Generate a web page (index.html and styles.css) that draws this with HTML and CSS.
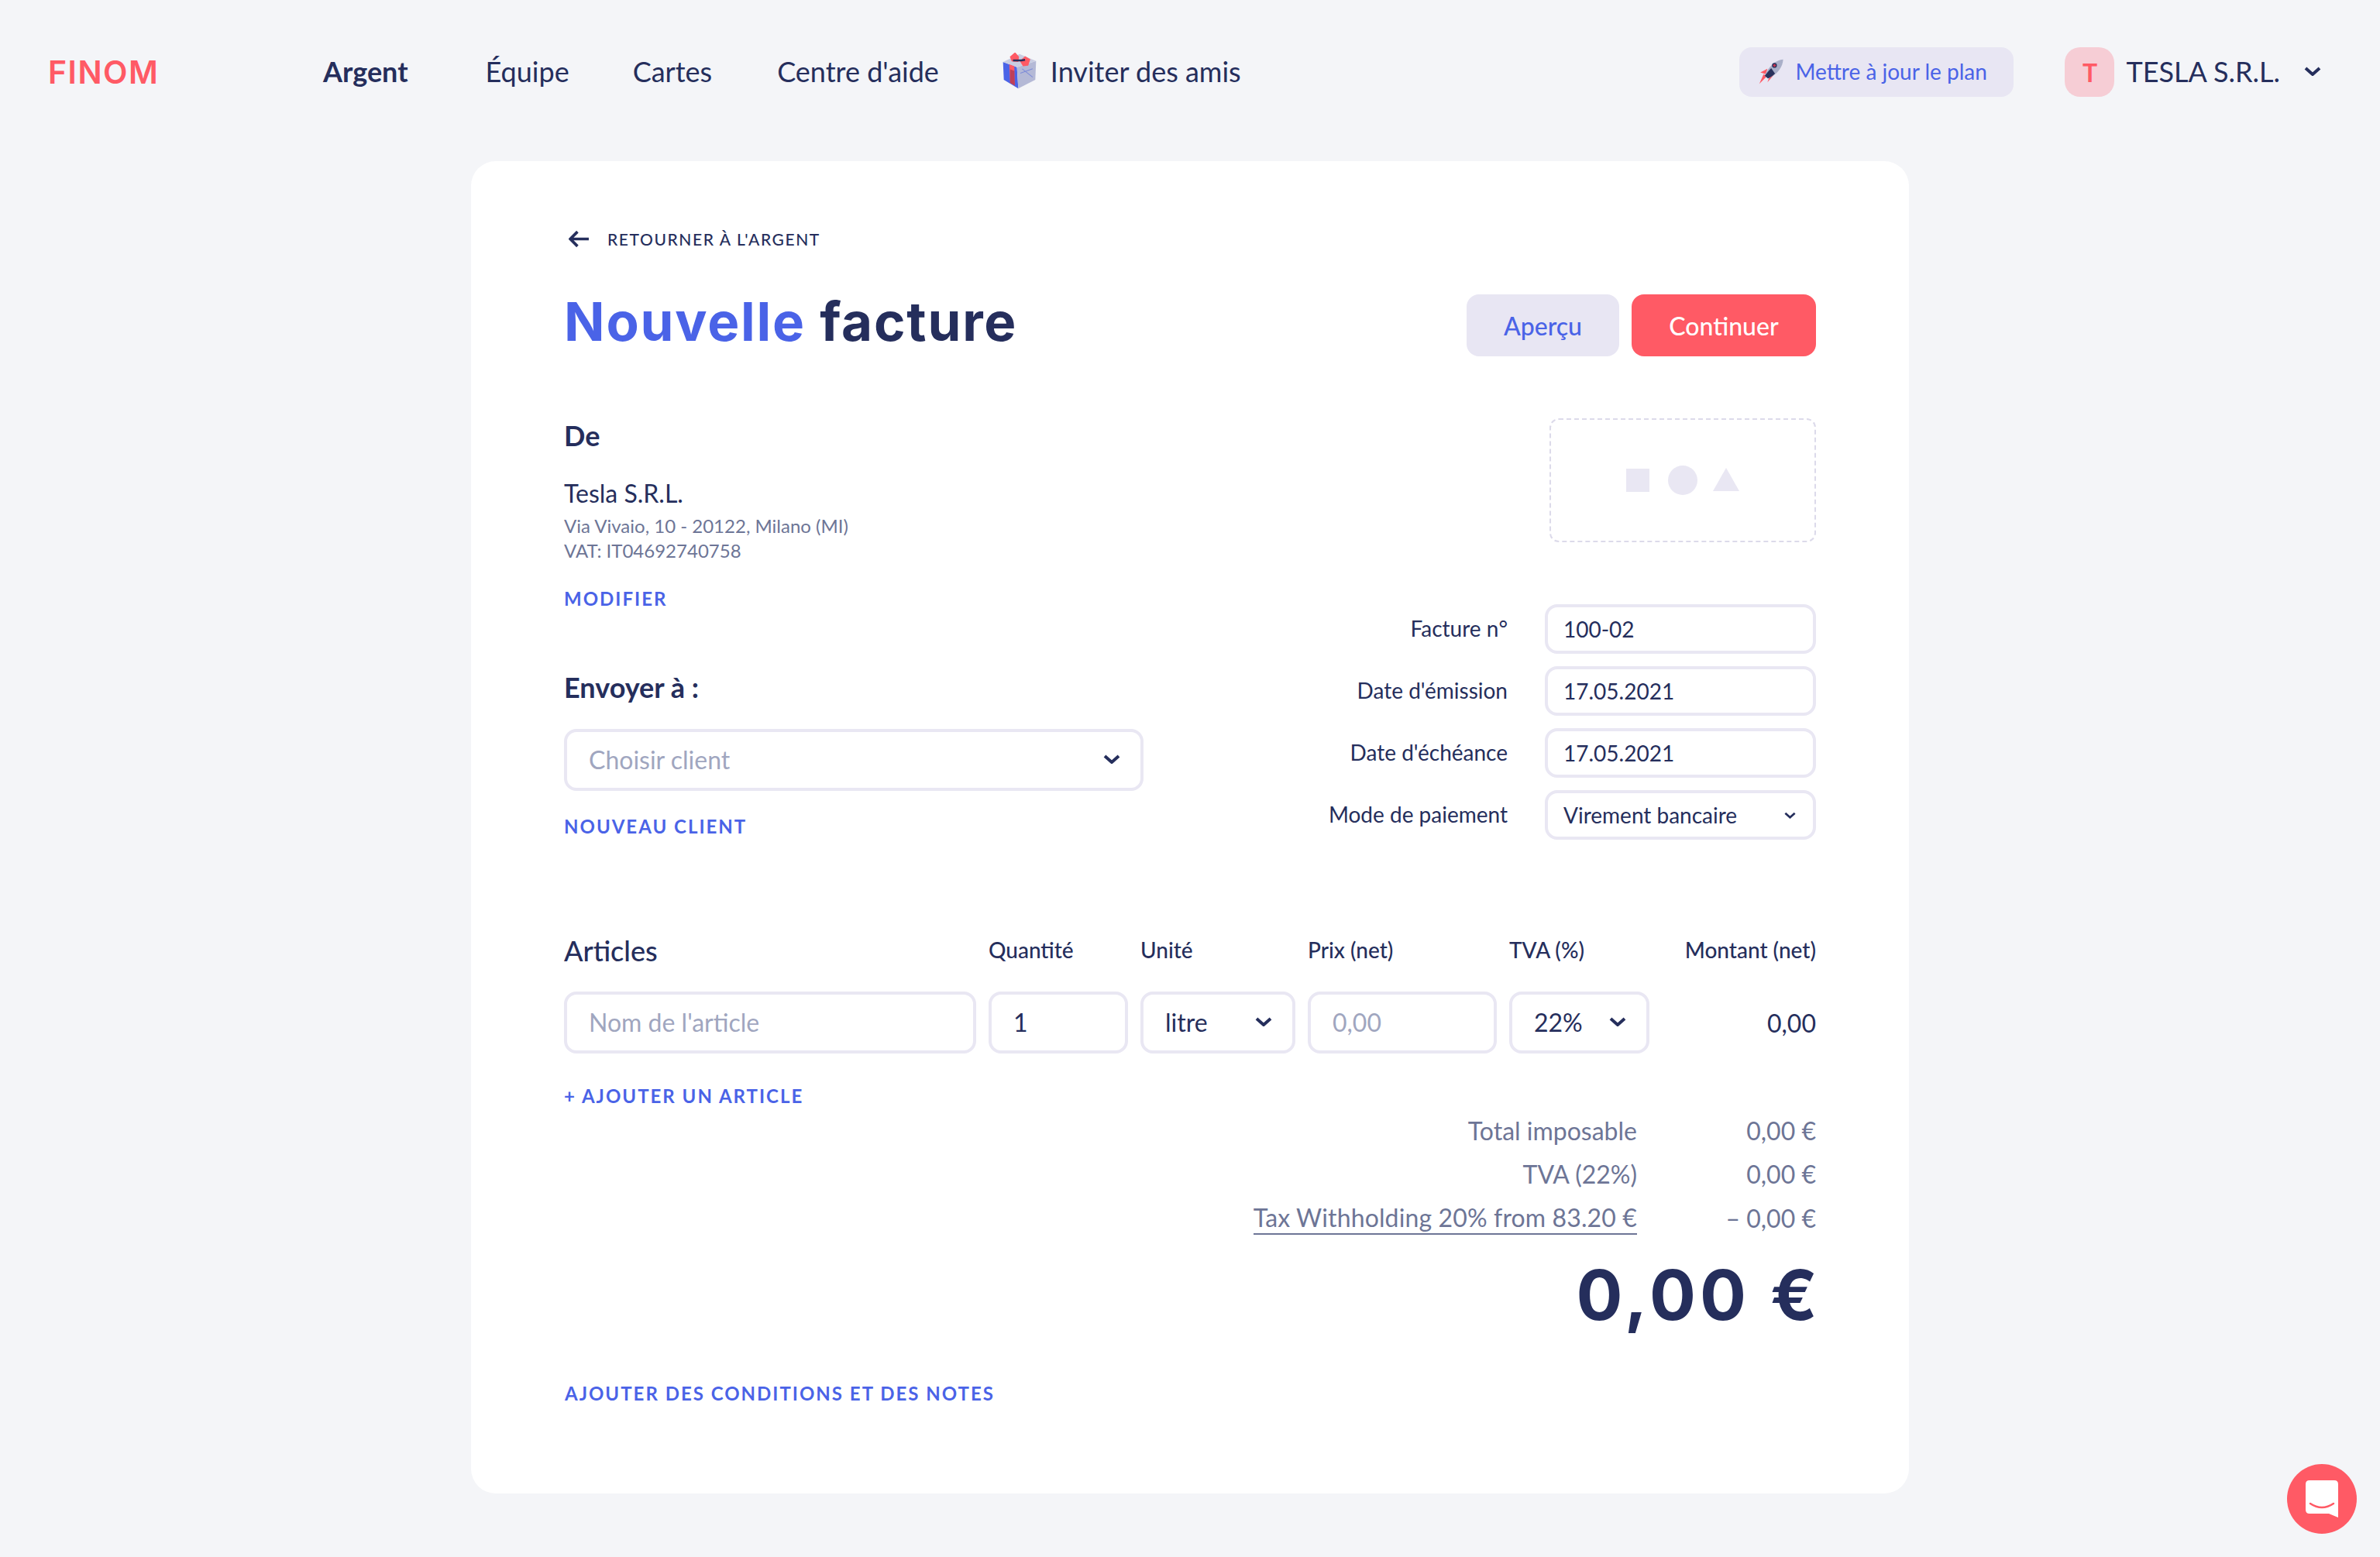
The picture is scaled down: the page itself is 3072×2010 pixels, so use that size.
FILE: index.html
```html
<!DOCTYPE html>
<html lang="fr">
<head>
    <meta charset="UTF-8">
    <meta name="viewport" content="width=device-width, initial-scale=1.0">
    <title>Nouvelle facture</title>
    <link rel="stylesheet" href="styles.css">
</head>
<body>
    <header class="nav">
        <div class="logo">FINOM</div>
        <nav class="nav-links">
            <a class="nav-link nav-link-active">Argent</a>
            <a class="nav-link">Équipe</a>
            <a class="nav-link">Cartes</a>
            <a class="nav-link nav-link-help">Centre d'aide</a>
            <a class="nav-link nav-invite">
                <svg class="gift-icon" viewBox="100 60 130 135">
                    <polygon points="102,92 155,112 160,193 105,160" fill="#4a63e7"/>
                    <polygon points="155,112 228,88 225,160 160,193" fill="#b4b9d6"/>
                    <polygon points="102,92 165,62 228,88 155,112" fill="#c9cde2"/>
                    <polygon points="126,101 145,108 147,182 129,172" fill="#ff5a65"/>
                    <polygon points="129,120 145,126 147,182 129,172" fill="#8a2a4c" opacity="0.55"/>
                    <path d="M168 135 L215 118 M175 118 L215 150" stroke="#7d8bd8" stroke-width="3" fill="none"/>
                    <path d="M128 72 L148 55 L163 72 L160 92 L135 90 Z" fill="#ff5a65"/>
                    <path d="M166 88 L186 70 L206 82 L198 106 L178 108 Z" fill="#ff5a65"/>
                    <path d="M140 86 L172 86 L186 84" stroke="#252e5c" stroke-width="7" fill="none"/>
                </svg>
                Inviter des amis
            </a>
        </nav>
        <div class="nav-right">
            <a class="upgrade">
                <svg class="rocket-icon" viewBox="60 45 100 100">
                    <path d="M72 98 L98 84 L92 104 Z" fill="#ff5a65"/>
                    <path d="M68 140 L84 104 L96 112 Z" fill="#ff5a65"/>
                    <path d="M98 134 L124 104 L106 112 Z" fill="#ff5a65"/>
                    <path d="M156 50 C128 52 102 76 88 110 L100 120 C134 106 154 80 156 50 Z" fill="#a9afc8"/>
                    <path d="M112 82 C104 90 96 100 88 110 L100 120 C110 116 118 110 126 102 Z" fill="#2a325c"/>
                    <circle cx="124" cy="72" r="9" fill="#2a325c"/>
                    <circle cx="124" cy="72" r="5" fill="#c8344f"/>
                </svg>
                Mettre à jour le plan
            </a>
            <div class="avatar">T</div>
            <div class="company">TESLA S.R.L.</div>
            <svg class="chevron chevron-nav" viewBox="0 0 22 12"><path d="M2 2 L11 10 L20 2"/></svg>
        </div>
    </header>

    <main class="card">
        <a class="back">
            <svg class="back-arrow" viewBox="0 0 26 22"><path d="M25 11 H2 M11 2 L2 11 L11 20"/></svg>
            RETOURNER À L'ARGENT
        </a>

        <div class="title-row">
            <h1 class="title"><span class="title-blue">Nouvelle</span> facture</h1>
            <div class="actions">
                <button class="btn btn-light">Aperçu</button>
                <button class="btn btn-red">Continuer</button>
            </div>
        </div>

        <section class="top">
            <div class="top-left">
                <h2 class="heading">De</h2>
                <div class="from-name">Tesla S.R.L.</div>
                <div class="from-line from-address">Via Vivaio, 10 - 20122, Milano (MI)</div>
                <div class="from-line">VAT: IT04692740758</div>
                <a class="link link-modify">MODIFIER</a>

                <h2 class="heading heading-send">Envoyer à :</h2>
                <div class="field field-big client-select">
                    <span class="placeholder">Choisir client</span>
                    <svg class="chevron" viewBox="0 0 22 12"><path d="M2 2 L11 10 L20 2"/></svg>
                </div>
                <a class="link link-client">NOUVEAU CLIENT</a>
            </div>

            <div class="top-right">
                <div class="logo-drop">
                    <span class="shape-square"></span>
                    <span class="shape-circle"></span>
                    <span class="shape-triangle"></span>
                </div>
                <div class="meta">
                    <label class="meta-label">Facture n°</label>
                    <div class="field field-small">100-02</div>
                    <label class="meta-label">Date d'émission</label>
                    <div class="field field-small">17.05.2021</div>
                    <label class="meta-label">Date d'échéance</label>
                    <div class="field field-small">17.05.2021</div>
                    <label class="meta-label">Mode de paiement</label>
                    <div class="field field-small">
                        Virement bancaire
                        <svg class="chevron chevron-small" viewBox="0 0 22 12"><path d="M2 2 L11 10 L20 2"/></svg>
                    </div>
                </div>
            </div>
        </section>

        <section class="items">
            <div class="items-head">Articles</div>
            <div class="col-head">Quantité</div>
            <div class="col-head">Unité</div>
            <div class="col-head">Prix (net)</div>
            <div class="col-head">TVA (%)</div>
            <div class="col-head col-right">Montant (net)</div>

            <div class="field field-big"><span class="placeholder">Nom de l'article</span></div>
            <div class="field field-big">1</div>
            <div class="field field-big">
                litre
                <svg class="chevron" viewBox="0 0 22 12"><path d="M2 2 L11 10 L20 2"/></svg>
            </div>
            <div class="field field-big"><span class="placeholder">0,00</span></div>
            <div class="field field-big">
                22%
                <svg class="chevron" viewBox="0 0 22 12"><path d="M2 2 L11 10 L20 2"/></svg>
            </div>
            <div class="amount">0,00</div>
        </section>

        <a class="link link-add">+ AJOUTER UN ARTICLE</a>

        <section class="totals">
            <div class="total-row"><span>Total imposable</span><span class="total-value">0,00 €</span></div>
            <div class="total-row"><span>TVA (22%)</span><span class="total-value">0,00 €</span></div>
            <div class="total-row total-row-tax"><span class="withholding">Tax Withholding 20% from 83.20 €</span><span class="total-value">– 0,00 €</span></div>
        </section>
        <div class="grand-total">0,00 €</div>

        <a class="link link-terms">AJOUTER DES CONDITIONS ET DES NOTES</a>
    </main>

    <button class="chat">
        <svg viewBox="0 0 42 48">
            <path d="M5 0 H37 Q42 0 42 5 V48 L30 43 H5 Q0 43 0 38 V5 Q0 0 5 0 Z" fill="#fff"/>
            <path d="M6 30 Q21 40 36 30" stroke="#ff5a65" stroke-width="2.5" fill="none" stroke-linecap="round"/>
        </svg>
    </button>
</body>
</html>
```

FILE: styles.css
```css
* {
    box-sizing: border-box;
}

body {
    margin: 0;
    height: 2010px;
    overflow: hidden;
    background: #f4f5f8;
    color: #252e5c;
    font-family: Lato, "Liberation Sans", sans-serif;
}

/* top bar */
.nav {
    display: flex;
    align-items: center;
    height: 186px;
    padding: 0 76px 0 62px;
}

.logo {
    width: 355px;
    color: #ff5a65;
    font-family: Inter, sans-serif;
    font-size: 41px;
    font-weight: 600;
    letter-spacing: 1.5px;
}

.nav-links {
    display: flex;
    align-items: center;
    gap: 82px;
    margin-top: -2px;
    font-size: 36px;
}

.nav-link-active {
    font-weight: 700;
    margin-right: 18px;
}

.nav-link-help {
    margin-left: 2px;
}

.nav-invite {
    display: flex;
    align-items: center;
    gap: 18px;
}

.gift-icon {
    width: 44px;
    height: 48px;
}

.nav-right {
    display: flex;
    align-items: center;
    margin-left: auto;
}

.upgrade {
    display: flex;
    align-items: center;
    gap: 14px;
    width: 354px;
    height: 64px;
    padding: 0 0 2px 23px;
    border-radius: 16px;
    background: #e8e6f3;
    color: #4a63e7;
    font-size: 28px;
}

.rocket-icon {
    width: 35px;
    height: 35px;
}

.avatar {
    display: flex;
    align-items: center;
    justify-content: center;
    width: 64px;
    height: 64px;
    margin-left: 66px;
    border-radius: 20px;
    background: #f6cdd5;
    color: #ff5a65;
    font-size: 32px;
    font-weight: 700;
}

.company {
    margin: -2px 0 0 15px;
    font-size: 36px;
}

.chevron {
    width: 22px;
    height: 12px;
    fill: none;
    stroke: #252e5c;
    stroke-width: 4;
}

.chevron-nav {
    margin: -2px 0 0 31px;
}

/* main card */
.card {
    width: 1856px;
    height: 1720px;
    margin: 22px 0 0 608px;
    padding: 80px 120px;
    border-radius: 32px;
    background: #fff;
}

.back {
    display: flex;
    align-items: center;
    gap: 23px;
    height: 40px;
    padding-left: 6px;
    font-size: 21px;
    font-weight: 500;
    letter-spacing: 1.6px;
}

.back-arrow {
    width: 27px;
    height: 23px;
    fill: none;
    stroke: #252e5c;
    stroke-width: 3.5;
}

.title-row {
    display: flex;
    align-items: center;
    justify-content: space-between;
    height: 80px;
    margin-top: 52px;
}

.title {
    margin: -10px 0 0;
    font-family: Inter, sans-serif;
    font-size: 69px;
    font-weight: 700;
    letter-spacing: 1.8px;
}

.title-blue {
    color: #4a63e7;
}

.actions {
    display: flex;
    gap: 16px;
}

.btn {
    height: 80px;
    border: none;
    border-radius: 16px;
    font-family: inherit;
    font-size: 32px;
    font-weight: 500;
}

.btn-light {
    width: 197px;
    background: #e8e6f3;
    color: #4a63e7;
}

.btn-red {
    width: 238px;
    background: #ff5a65;
    color: #fff;
}

.top {
    display: flex;
    justify-content: space-between;
    height: 544px;
    margin-top: 80px;
}

.heading {
    margin: 0;
    font-size: 36px;
    font-weight: 700;
    line-height: 44px;
}

.heading-send {
    margin-top: 77px;
}

.from-name {
    margin-top: 33px;
    font-size: 32px;
    line-height: 40px;
}

.from-line {
    color: #6d7596;
    font-size: 24px;
    line-height: 32px;
}

.from-address {
    margin-top: 6px;
}

.link {
    display: block;
    color: #4a63e7;
    font-size: 24px;
    font-weight: 700;
    line-height: 30px;
    letter-spacing: 2px;
}

.link-modify {
    margin-top: 31px;
}

.link-client {
    margin-top: 31px;
}

.field {
    display: flex;
    align-items: center;
    justify-content: space-between;
    border: 4px solid #e9e7f3;
    border-radius: 16px;
    background: #fff;
}

.field-big {
    height: 80px;
    padding: 0 26px 2px 28px;
    font-size: 32px;
}

.field-small {
    height: 64px;
    padding: 0 22px 0 20px;
    font-size: 28px;
}

.chevron-small {
    width: 15px;
    height: 9px;
}

.placeholder {
    color: #a0a6bf;
}

.client-select {
    width: 748px;
    margin-top: 32px;
}

.top-right {
    display: flex;
    flex-direction: column;
    align-items: flex-end;
}

.logo-drop {
    display: flex;
    align-items: center;
    justify-content: center;
    gap: 24px;
    width: 344px;
    height: 160px;
    border: 2px dashed #dcdaea;
    border-radius: 12px;
}

.shape-square {
    width: 30px;
    height: 30px;
    background: #e9e7f3;
}

.shape-circle {
    width: 38px;
    height: 38px;
    border-radius: 50%;
    background: #e9e7f3;
}

.shape-triangle {
    width: 0;
    height: 0;
    margin: -2px 0 0 -4px;
    border-left: 17px solid transparent;
    border-right: 17px solid transparent;
    border-bottom: 30px solid #e9e7f3;
}

.meta {
    display: grid;
    grid-template-columns: auto 350px;
    align-items: center;
    column-gap: 48px;
    row-gap: 16px;
    margin-top: 80px;
}

.meta-label {
    padding-bottom: 2px;
    font-size: 28px;
    text-align: right;
}

/* article table */
.items {
    display: grid;
    grid-template-columns: 532px 180px 200px 244px 181px 1fr;
    grid-template-rows: 44px 80px;
    column-gap: 16px;
    row-gap: 31px;
    align-items: center;
    margin-top: 121px;
}

.items-head {
    font-size: 36px;
    font-weight: 500;
}

.col-head {
    padding-bottom: 3px;
    font-size: 28px;
    font-weight: 500;
}

.col-right,
.amount {
    text-align: right;
}

.amount {
    font-size: 32px;
}

.link-add {
    margin-top: 40px;
}

.totals {
    margin-top: 1px;
    color: #6d7596;
    font-size: 32px;
}

.total-row {
    display: flex;
    justify-content: flex-end;
    align-items: center;
    height: 56px;
}

.total-row-tax {
    padding-top: 2px;
}

.total-value {
    width: 231px;
    text-align: right;
}

.withholding {
    line-height: 40px;
    letter-spacing: 0.13px;
    border-bottom: 2px solid #6d7596;
    margin-top: 2px;
}

.grand-total {
    height: 100px;
    margin: 23px -7px 0 0;
    font-family: Inter, sans-serif;
    font-size: 89px;
    font-weight: 700;
    line-height: 100px;
    letter-spacing: 5px;
    text-align: right;
}

.link-terms {
    margin-top: 62px;
    padding-left: 1px;
}

.chat {
    position: fixed;
    left: 2952px;
    top: 1890px;
    display: flex;
    align-items: center;
    justify-content: center;
    width: 90px;
    height: 90px;
    padding: 0;
    border: none;
    border-radius: 50%;
    background: #ff5a65;
}

.chat svg {
    width: 42px;
    height: 48px;
}
```
